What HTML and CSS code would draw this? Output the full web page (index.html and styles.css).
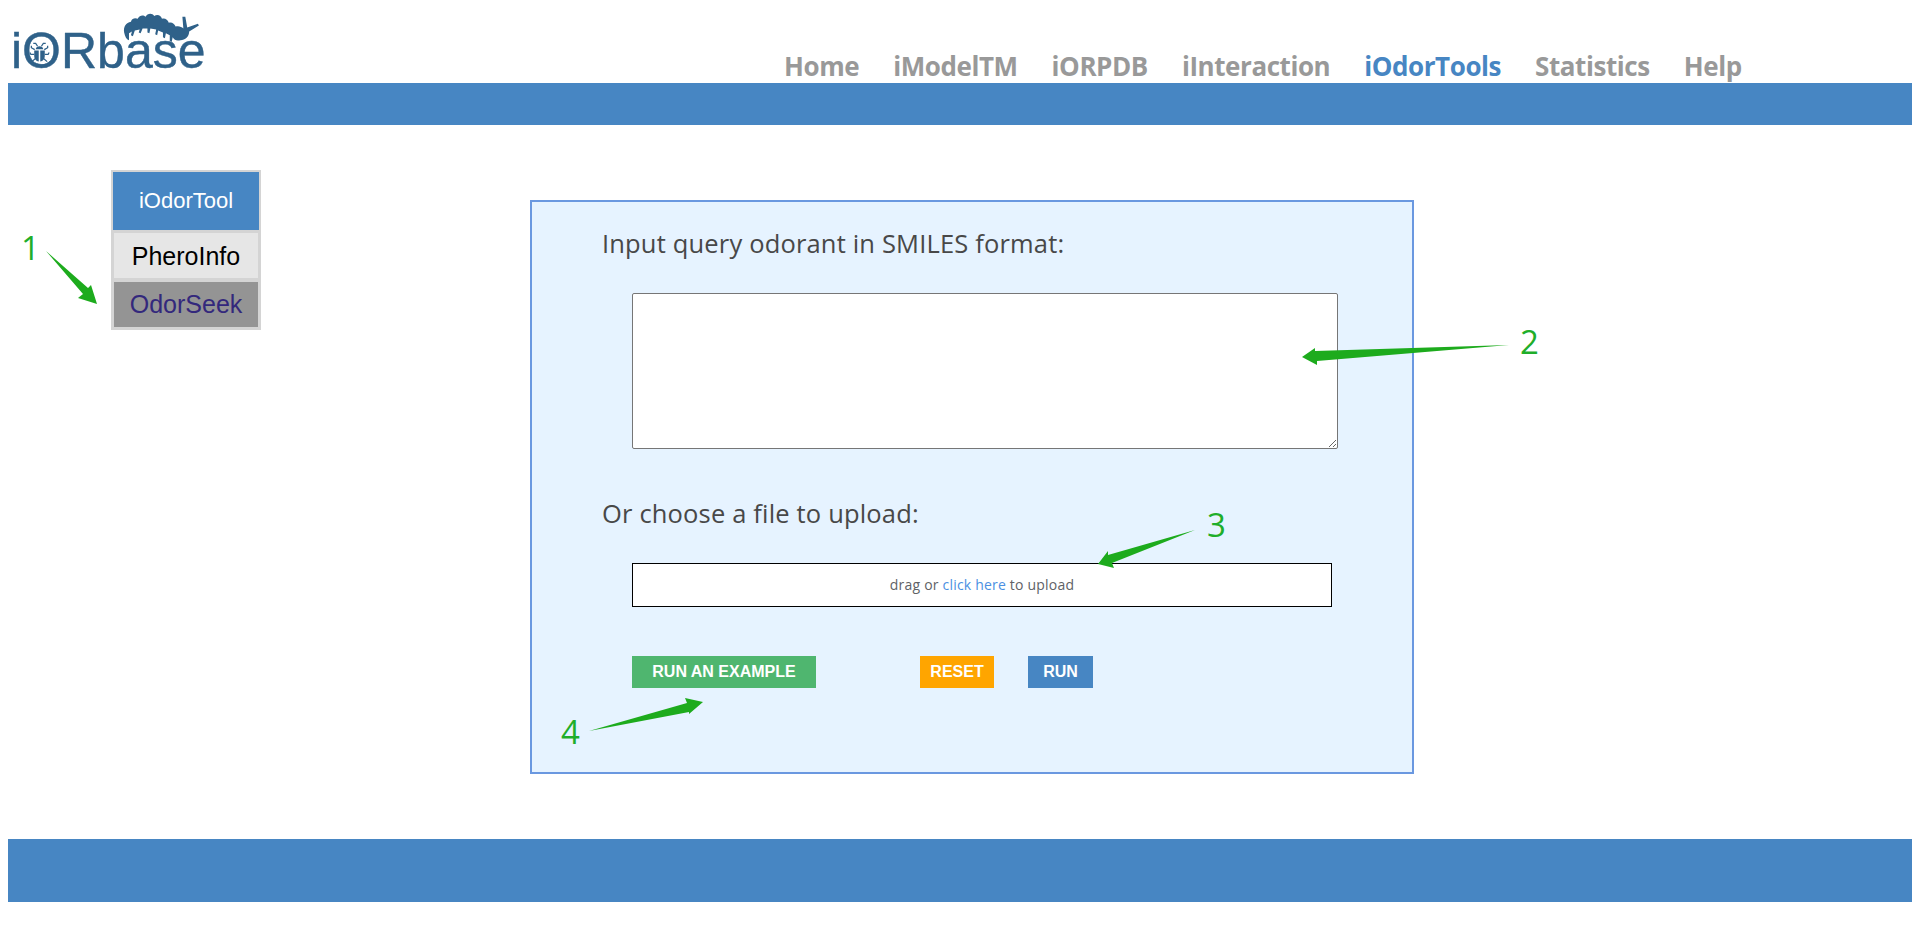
FILE: index.html
```html
<!DOCTYPE html>
<html lang="en">
<head>
<meta charset="utf-8">
<title>iORbase - iOdorTools</title>
<link rel="stylesheet" href="styles.css">
</head>
<body>
<div class="page">
  <header class="top">
    <div class="logo">
      <span class="logo-text">i<span class="logo-o">O</span>Rbase</span>
      <svg class="bug" viewBox="0 0 80 34" aria-hidden="true">
        <path class="bug-fill" d="M1 21C0 15 3 11 8 10C9 6 13 6 15 7C17 3 21 3 23 5C25 1 30 1 32 4C35 2 39 3 40 7C43 6 46 8 47 11C50 10 53 12 54 15C57 14 60 15 62 17L61 5L64 5L66 16L77 12L78 14L68 20C68 25 64 29 59 29C55 30 53 29 51 26L50 31L48 30L48 24L44 22L43 27L41 26L41 21L36 19L35 24L33 23L34 18L28 17L27 22L25 21L25 17L20 17L18 22L16 21L17 18L12 19L10 25L8 24L9 20L6 22L6 29C3 28 2 25 1 21Z"/>
      </svg>
      <svg class="beetle" viewBox="0 0 24 24" aria-hidden="true">
        <path class="bug-fill" d="M8 8.500C8.500 6.500 10 5.500 12 5.500C14 5.500 15.500 6.500 16 8.500ZM6.500 10H11.200V21.500C8.500 21.200 6.500 19 6.500 16ZM12.800 10H17.500V16C17.500 19 15.500 21.200 12.800 21.500Z"/>
        <path class="bug-line" d="M10 5.500L8 2.500H5.500M14 5.500L16 2.500H18.500M7 9L3.500 7V5M17 9L20.500 7V5M6.500 14H3L2 12M17.500 14H21L22 12M7.500 18.500L4 21.500M16.500 18.500L20 21.500"/>
      </svg>
    </div>
    <nav class="nav">
      <a class="nav-link">Home</a>
      <a class="nav-link">iModelTM</a>
      <a class="nav-link">iORPDB</a>
      <a class="nav-link">iInteraction</a>
      <a class="nav-link nav-current">iOdorTools</a>
      <a class="nav-link">Statistics</a>
      <a class="nav-link">Help</a>
    </nav>
  </header>
  <div class="band band-top"></div>

  <main class="main">
    <aside class="side">
      <a class="side-item side-active">iOdorTool</a>
      <a class="side-item side-light">PheroInfo</a>
      <a class="side-item side-dark">OdorSeek</a>
    </aside>
    <section class="panel">
      <h2 class="label label-first">Input query odorant in SMILES format:</h2>
      <textarea class="query"></textarea>
      <h2 class="label label-second">Or choose a file to upload:</h2>
      <div class="upload">drag or <a class="upload-link">click here</a> to upload</div>
      <div class="actions">
        <button class="btn btn-example">RUN AN EXAMPLE</button>
        <button class="btn btn-reset">RESET</button>
        <button class="btn btn-run">RUN</button>
      </div>
    </section>
  </main>

  <div class="band band-bottom"></div>
</div>

<svg class="notes" viewBox="0 0 1920 937" aria-hidden="true">
  <polygon class="arrow" points="46,251 88,288 91,285 97,304 78,298 83,294"/>
  <polygon class="arrow" points="1509,345 1315,351 1315,348 1302,357 1317,365 1317,361"/>
  <polygon class="arrow" points="1195,530 1108,555 1108,551 1098,564 1114,568 1112,563"/>
  <polygon class="arrow" points="589,731 687,703 685,698 703,702 689,714 689,712"/>
  <text class="note" x="21" y="260">1</text>
  <text class="note" x="1520" y="354">2</text>
  <text class="note" x="1207" y="537">3</text>
  <text class="note" x="561" y="744">4</text>
</svg>
</body>
</html>
```
FILE: styles.css
```css
* { box-sizing: border-box; }

html, body {
  margin: 0;
  background: #fff;
}

.page {
  padding: 0 8px;
  height: 937px;
  overflow: hidden;
}

.top {
  display: flex;
  height: 83px;
  align-items: flex-end;
}

.logo {
  position: relative;
  width: 776px;
  height: 83px;
  flex: none;
}

.logo-text {
  position: absolute;
  left: 3px;
  top: 22px;
  font: 400 50px/58px "Liberation Sans", Arial, sans-serif;
  color: #2f6189;
  -webkit-text-stroke: 0.4px #2f6189;
}

.logo-o { display: inline-block; }

.bug {
  position: absolute;
  left: 115px;
  top: 12px;
  width: 78px;
  height: 33px;
}

.beetle {
  position: absolute;
  left: 20px;
  top: 41px;
  width: 23px;
  height: 23px;
}

.bug-fill { fill: #2f6189; }

.bug-line {
  fill: none;
  stroke: #2f6189;
  stroke-width: 1.300;
}

.nav {
  display: flex;
  gap: 34px;
  height: 83px;
  padding-top: 48px;
}

.nav-link {
  font: 700 26px/36px "Open Sans", "Noto Sans", sans-serif;
  letter-spacing: -0.430px;
  color: #999;
  white-space: nowrap;
}

.nav-current { color: #4786c3; }

.band { background: #4786c3; }
.band-top { height: 42px; }
.band-bottom { height: 63px; }

.main {
  display: flex;
  align-items: flex-start;
  height: 714px;
}

.side {
  display: flex;
  flex-direction: column;
  width: 150px;
  height: 160px;
  margin: 45px 0 0 103px;
  padding: 2px;
  background: #d4d4d4;
  flex: none;
}

.side-item {
  display: flex;
  align-items: center;
  justify-content: center;
  font-family: "Liberation Sans", Arial, sans-serif;
  font-size: 25px;
}

.side-active {
  height: 58px;
  background: #4786c3;
  color: #fff;
  font-size: 22px;
}

.side-light {
  height: 45px;
  margin: 3px 1px 0;
  padding-top: 1px;
  background: #e6e6e6;
  color: #000;
}

.side-dark {
  height: 45px;
  margin: 4px 1px 0;
  background: #949494;
  color: #33287c;
}

.panel {
  width: 884px;
  height: 574px;
  margin: 75px 0 0 269px;
  padding: 24px 0 0 70px;
  background: #e6f3ff;
  border: 2px solid #6a98e0;
  flex: none;
}

.label {
  margin: 0;
  font: 400 25.500px/34px "Open Sans", "Noto Sans", sans-serif;
  letter-spacing: 0.170px;
  color: #484848;
}

.label-second { margin-top: 47px; }

.query {
  display: block;
  width: 706px;
  height: 156px;
  margin: 33px 0 0 30px;
  background: #fff;
  border: 1px solid #767676;
  border-radius: 2px;
  padding: 2px;
}

.upload {
  width: 700px;
  height: 44px;
  margin: 33px 0 0 30px;
  background: #fff;
  border: 1px solid #000;
  font: 400 14px/41px "Open Sans", "Noto Sans", sans-serif;
  letter-spacing: 0.200px;
  text-align: center;
  color: #606266;
}

.upload-link { color: #4a90e2; }

.actions {
  display: flex;
  margin: 49px 0 0 30px;
}

.btn {
  height: 32px;
  padding: 0;
  border: 0;
  color: #fff;
  font: 700 16px/32px "Liberation Sans", Arial, sans-serif;
}

.btn-example {
  width: 184px;
  background: #4fb66f;
}

.btn-reset {
  width: 74px;
  margin-left: 104px;
  background: #ffa500;
}

.btn-run {
  width: 65px;
  margin-left: 34px;
  background: #4786c3;
}

.notes {
  position: absolute;
  left: 0;
  top: 0;
  width: 1920px;
  height: 937px;
  pointer-events: none;
}

.arrow { fill: #1dab1d; }

.note {
  font: 400 33px "Open Sans", "Noto Sans", sans-serif;
  fill: #1fae2a;
}
```
